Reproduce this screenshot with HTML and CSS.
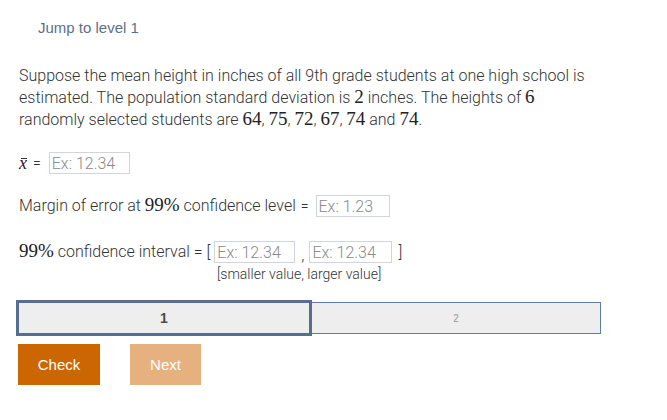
FILE: index.html
```html
<!DOCTYPE html>
<html>
<head>
<meta charset="utf-8">
<link rel="stylesheet" href="styles.css">
</head>
<body>
<div class="page">
  <div class="jump">Jump to level 1</div>
  <p class="question">Suppose the mean height in inches of all 9th grade students at one high school is estimated. The population standard deviation is <span class="m">2</span> inches. The heights of <span class="m">6</span> randomly selected students are <span class="m">64</span>, <span class="m">75</span>, <span class="m">72</span>, <span class="m">67</span>, <span class="m">74</span> and <span class="m">74</span>.</p>

  <div class="row row-mean">
    <span class="m mi xbar">x</span><span class="eq">=</span>
    <input class="ans w81" type="text" placeholder="Ex: 12.34">
  </div>

  <div class="row row-moe">
    <span>Margin of error at <span class="m">99%</span> confidence level</span><span class="eq">=</span>
    <input class="ans w74" type="text" placeholder="Ex: 1.23">
  </div>

  <div class="interval">
    <div class="row row-ci">
      <span><span class="m">99%</span> confidence interval = [</span>
      <input class="ans w81 first" type="text" placeholder="Ex: 12.34">
      <span class="comma">,</span>
      <input class="ans w83" type="text" placeholder="Ex: 12.34">
      <span class="close">]</span>
    </div>
    <div class="hint">[smaller value, larger value]</div>
  </div>

  <div class="levels">
    <div class="level current">1</div>
    <div class="level other">2</div>
  </div>

  <div class="buttons">
    <button class="btn check">Check</button>
    <button class="btn next">Next</button>
  </div>
</div>
</body>
</html>
```

FILE: styles.css
```css
html, body {
  margin: 0;
  padding: 0;
  background: #ffffff;
}

.page {
  padding: 0 0 0 16px;
  width: 585px;
  font-family: Roboto, "Liberation Sans", sans-serif;
  font-weight: 300;
  color: #333333;
}

.jump {
  margin-top: 19px;
  padding-left: 22px;
  font-family: "Liberation Sans", Arial, sans-serif;
  font-weight: 400;
  font-size: 15px;
  line-height: 18px;
  color: #5d7089;
}

.question {
  margin: 28px 0 0 3px;
  font-size: 16px;
  line-height: 22px;
}

.m {
  font-family: "Liberation Serif", "Times New Roman", serif;
  font-weight: 400;
  font-size: 19px;
  line-height: 16px;
  color: #222222;
}

.mi {
  font-style: italic;
}

.xbar {
  position: relative;
  display: inline-block;
  font-size: 18px;
  line-height: 22px;
}

.xbar::before {
  content: "";
  position: absolute;
  left: 2px;
  right: 0;
  top: 6px;
  height: 1px;
  background: #333;
}

.row {
  display: flex;
  align-items: center;
  height: 22px;
  font-size: 16px;
  line-height: 22px;
  margin-left: 3px;
}

.row-mean {
  margin-top: 21px;
}

.row-moe {
  margin-top: 21px;
}

.eq {
  margin: 0 8px 0 6px;
  font-size: 14px;
}

.row-moe .eq {
  margin: 0 7px 0 5px;
}

.ans {
  box-sizing: border-box;
  height: 22px;
  margin: 0;
  padding: 0 2px;
  border: 1px solid #cfd5da;
  border-radius: 0;
  font-family: Roboto, "Liberation Sans", sans-serif;
  font-weight: 300;
  font-size: 16px;
  color: #333;
  background: #fff;
  outline: none;
}

.ans::placeholder {
  color: #8a8a8a;
  opacity: 1;
}

.w81 { width: 81px; }
.w74 { width: 74px; }
.w83 { width: 83px; }

.interval {
  margin-top: 24px;
}

.row-ci .first {
  margin-left: 4px;
}

.comma {
  align-self: flex-end;
  margin: 0 5px 0 6px;
  line-height: 14px;
}

.close {
  margin-left: 6px;
}

.hint {
  margin: 3px 0 0 201px;
  font-size: 14px;
  line-height: 16px;
  color: #333;
}

.levels {
  display: flex;
  align-items: center;
  margin-top: 18px;
  width: 585px;
}

.level {
  box-sizing: border-box;
  display: flex;
  align-items: center;
  justify-content: center;
  background: #eeeeee;
  font-family: "Liberation Sans", Arial, sans-serif;
}

.current {
  width: 296px;
  height: 36px;
  border: 3px solid #566f8e;
  font-size: 14px;
  font-weight: 700;
  color: #4a4a4a;
}

.other {
  width: 289px;
  height: 32px;
  border: 1px solid #5a7ea5;
  border-left: none;
  font-size: 10px;
  font-weight: 400;
  color: #999;
}

.buttons {
  display: flex;
  gap: 30px;
  margin: 8px 0 0 2px;
}

.btn {
  height: 41px;
  border: none;
  border-radius: 0;
  padding: 0;
  font-family: "Liberation Sans", Arial, sans-serif;
  font-size: 15px;
  color: #ffffff;
  cursor: pointer;
}

.check {
  width: 82px;
  background: #cc6600;
}

.next {
  width: 71px;
  background: #e6b17f;
}
```
